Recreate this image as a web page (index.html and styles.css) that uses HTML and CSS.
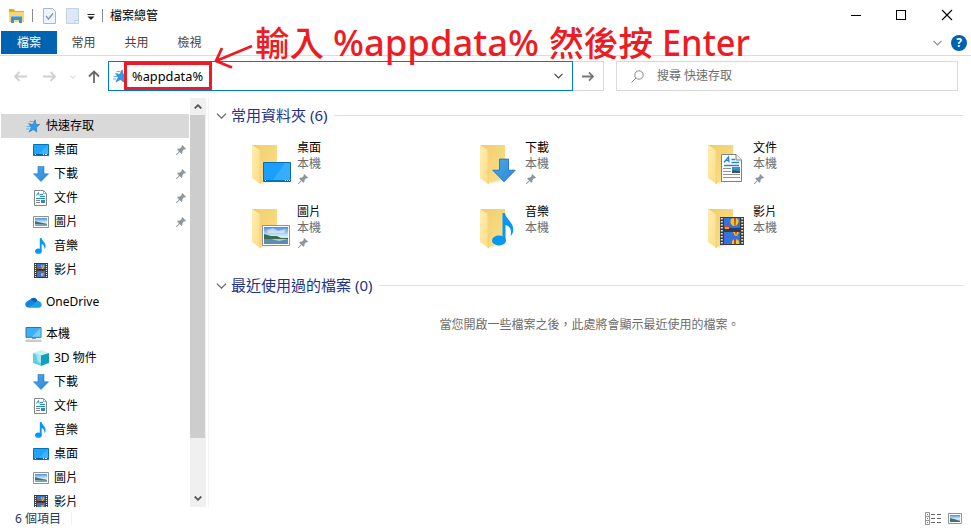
FILE: index.html
```html
<!DOCTYPE html>
<html lang="zh-TW">
<head>
<meta charset="utf-8">
<title>檔案總管</title>
<link rel="stylesheet" href="styles.css">
</head>
<body>
<svg class="defs" aria-hidden="true">
  <defs>
    <linearGradient id="gFold" x1="0" y1="0" x2="1" y2="1"><stop offset="0" stop-color="#efcd68"/><stop offset="1" stop-color="#fbe08f"/></linearGradient>
    <linearGradient id="gFlap" x1="0" y1="0" x2="1" y2="1"><stop offset="0" stop-color="#ffeeb4"/><stop offset="1" stop-color="#fddc82"/></linearGradient>
    <linearGradient id="gDown" x1="0" y1="0" x2="1" y2="1"><stop offset="0" stop-color="#4ba6ea"/><stop offset="1" stop-color="#2b88da"/></linearGradient>
    <linearGradient id="gSky" x1="0" y1="0" x2="0" y2="1"><stop offset="0" stop-color="#4a8fe0"/><stop offset=".55" stop-color="#d8eefa"/><stop offset="1" stop-color="#8fb4c8"/></linearGradient>
    <symbol id="pin" viewBox="0 0 10 10"><path fill="#8c969e" d="M6.200 0 10 3.800 8.800 4.400 8 4.300 6.500 6 6.300 8.200 5.400 8.800 3.600 7 .8 9.900 0 10 .1 9.200 3 6.400 1.200 4.600 2 3.700 4 3.500 5.700 2 5.600 1z"/></symbol>
    <symbol id="star" viewBox="0 0 14 14"><path fill="#2e9be8" stroke="#1478c8" stroke-width=".6" d="M9.200.8 9.800 5.200 13.700 5.600 10.400 8.300 10.800 13 7.400 10.500 3 13 5.200 8.500 3.200 5.600 7 5.200z"/><path stroke="#4bb0ee" stroke-width=".9" d="M3.500 2.500h4M2 4.500h3M.5 7.500h3.500M0 10h3"/></symbol>
    <symbol id="desk" viewBox="0 0 16 12"><path fill="#20a3fb" stroke="#0870b8" d="M.5.5h15v11H.5z"/><path fill="#41b2ff" d="M15 1v9H6z"/><path stroke="#085a98" d="M1 10.500h14"/><path stroke="#fff" d="M2 10.500h1M10 10.500h1M12 10.500h2"/></symbol>
    <symbol id="down" viewBox="0 0 16 16"><path fill="url(#gDown)" stroke="#2273b8" stroke-width=".6" d="M5 .4h6v7.400h4.500L8 15.500.5 7.800H5z"/></symbol>
    <symbol id="doc" viewBox="0 0 13 16"><path fill="#fff" stroke="#858585" d="M.5.5h9l3 3v12H.5z"/><path fill="none" stroke="#aaa" d="M9.500.5v3h3"/><path fill="none" stroke="#2588ce" d="M2.500 5.500 4.500 2.500 5 5.500M6 4.500h3M6 6.500h5M2 8.500h9"/><path stroke="#858585" d="M2 10.500h4M2 12.500h4"/><path fill="#3e83b8" d="M7 10h4v3H7z"/></symbol>
    <symbol id="pic" viewBox="0 0 16 12"><path fill="#fff" stroke="#929292" d="M.5.5h15v11H.5z"/><path fill="url(#gSky)" d="M2 2h12v8H2z"/><path fill="#437566" d="M2 5 5 6l3 .5L14 8v1L2 8z"/><path fill="#7ba3bd" d="M2 8.500h12V10H2z"/></symbol>
    <symbol id="note" viewBox="0 0 11 16"><ellipse cx="3.400" cy="13.200" rx="3.300" ry="2.600" fill="#0798f4"/><path fill="#0798f4" d="M4.800 0h1.700C6.800 3 11.400 4.500 10.500 9.500L9.500 11C9.500 8 8.300 6.500 6.700 6v7.500H4.800z"/></symbol>
    <symbol id="film" viewBox="0 0 14 15"><path fill="#3b3b3b" d="M0 0h14v15H0z"/><path stroke="#f2f2f2" stroke-width="1.200" stroke-dasharray="1 1" d="M1.500 1v13M12.500 1v13"/><path fill="#3a74cf" d="M3 1h8v6H3zM3 8h8v6H3z"/><path fill="#e4b51d" d="M7 2h3l.5 1.500L9 6H8zM7 10h3l-1 3H7z"/><path fill="#cf3b25" d="M8.300 2h1l-.2 3zM3 5l2-.5V6H3zM7 9h2l-1 2z"/><path fill="#27333d" d="M3 6h8v1H3z"/></symbol>
    <symbol id="cloud" viewBox="0 0 17 11"><path fill="#0b63b7" d="M5 3C7 0 11 0 12.400 3.500L12 8H4z"/><path fill="#1286d8" d="M4 3C7 2 9 5 12 7L4 10.500C0 11 -1 6 2 4.500z"/><path fill="#1c9fe9" d="M3.500 10.700 12 4C15 3.500 17 6 16.600 8.500 16.200 10 15 10.700 13.500 10.700z"/></symbol>
    <symbol id="pc" viewBox="0 0 17 15"><path fill="#39b0f8" stroke="#3e7292" d="M1 .5h15v9.800H1z"/><path fill="#73ccff" d="M15.500 1v8.800H7z"/><path stroke="#8397a5" d="M7 11.500h4M.5 14h16"/><path stroke="#c5d0d8" d="M1 13h15"/></symbol>
    <symbol id="cube" viewBox="0 0 16 16"><path fill="#c8f1f5" d="M0 3 8 0l8 3-8 3z"/><path fill="#5fd1dd" d="M0 3 8 5.500V16L0 13z"/><path fill="#129fb7" d="m16 3-8 2.500V16l8-3z"/><path fill="#a4e8ef" d="m3 4 5 1.500V13l-3-1z"/></symbol>
    <symbol id="chev" viewBox="0 0 12 7"><path fill="none" stroke="currentColor" stroke-width="1.500" d="m.7.700 5.300 5.300L11.300.700"/></symbol>
    <symbol id="arrow" viewBox="0 0 13 11"><path fill="none" stroke="currentColor" stroke-width="1.900" d="M0 5.500h12M7.500 1 12 5.500 7.500 10"/></symbol>
    <symbol id="folder" viewBox="0 0 42 42"><path fill="#f0f0f0" d="m11 39 17-4 5 1-20 4z"/><path fill="url(#gFold)" d="M2 1h25v34l-16 4-9-5z"/><path fill="url(#gFlap)" d="m2 1 9 6v33.500L2 34z"/><path fill="#efc86a" d="m9.500 6 1.500 1v33.500l-1.500-1z" opacity=".5"/></symbol>
    <symbol id="bigfilm" viewBox="0 0 24 28"><path fill="#3b3b3b" d="M0 0h24v28H0z"/><path stroke="#e2e2e2" stroke-width="2" stroke-dasharray="1.500 1.500" d="M1.800 1v27M22.200 1v27"/><path fill="#3571df" d="M4 1h16v12H4zM4 15h16v12H4z"/><path fill="#efc71d" d="M11 2q4-2 7 0 2 3-2 7h-3Q9 6 11 2zM13 15h6l-2 4h-2zM12 24q3-4 7 0v3h-7z"/><path fill="#d43d25" d="M14 1h2l-.5 8h-1zM4 9q4-2 7 1v3H4zM15 15h2l-1 4zM14 22h2v5h-2z"/><path fill="#153f7b" d="M4 11h16v2H4z"/><path fill="#d7b32b" d="M5 10h4v2H5z"/></symbol>
    <symbol id="bigdoc" viewBox="0 0 21 28"><path fill="#fff" stroke="#808080" d="M.5.5H15L20.500 6v21.500H.5z"/><path fill="#eee" stroke="#808080" d="M15 .5V6h5.500"/><path fill="none" stroke="#2588ce" stroke-width="1.300" d="M3 8.500 7.500 3 8 8.500M4.500 6.500h3M10.500 5.500H14M10.500 8.500H18M3 11.500h15"/><path stroke="#929292" d="M2 14.500h8M2 17.500h8M2 20.500h17M2 23.500h17"/><path fill="#408dd0" d="M11 13h8v6h-8z"/><path fill="#315d58" d="m11 16 8 1v2h-8z"/></symbol>
    <symbol id="bigpic" viewBox="0 0 28 21"><path fill="#fff" stroke="#929292" d="M.5.500h27v20H.500z"/><path fill="url(#gSky)" d="M2 2h24v17H2z"/><path fill="#fff" opacity=".5" d="m5 5 6-2 5 3 8-2-2 4H6z"/><path fill="#3d6b50" d="m2 9 7 2 6 0 4 2 7 0v1L2 15z"/><path fill="#5c8dae" d="M2 14h24v5H2z"/><path fill="#b4cbd6" d="M9 14h17l-9 2z"/></symbol>
    <symbol id="bigdesk" viewBox="0 0 28 20"><path fill="#1a9fff" stroke="#086eae" d="M.5.5h27v19H.5z"/><path fill="#37adff" d="M27 1v17H10L22 1z"/><path stroke="#0875bd" d="M1 18.500h26"/><path stroke="#fff" stroke-dasharray="1 1" d="M2 18.500h1M22 18.500h5"/></symbol>
  </defs>
</svg>
<div class="window">
  <header class="titlebar">
    <svg class="app-icon" viewBox="0 0 17 14"><path fill="#e9a820" d="M1 0h5l1 2h9v11H1z"/><path fill="#ffd56a" d="M1 3h15v10H1z"/><path fill="#3993d6" d="M3 7h11v7h-3v-3H6v3H3z"/><path fill="#73bdf0" d="M3 7h11v1H3z"/></svg>
    <i class="sep s1"></i>
    <svg class="q1" viewBox="0 0 13 16"><path fill="#eef4fb" stroke="#a5b7ca" d="M.5.500h9l3 3v12H.500z"/><path fill="none" stroke="#7890aa" stroke-width="1.200" d="m3 8 2.500 3L10 5.500"/></svg>
    <svg class="q2" viewBox="0 0 13 16"><path fill="#dde8f6" stroke="#c3d2e5" d="M.5.500h12v15H.500z"/><path fill="#fff" stroke="#b9cadf" d="M9 15.500v-3h3.500"/></svg>
    <svg class="q3" viewBox="0 0 8 6"><path stroke="#222" d="M.5.500h7"/><path fill="#222" d="M.5 2.500h7L4 6z"/></svg>
    <i class="sep s2"></i>
    <span class="title">檔案總管</span>
    <svg class="winbtns" viewBox="0 0 102 12"><path fill="none" stroke="#000" shape-rendering="crispEdges" d="M0 6.500h10M45.500 1.500h9v9h-9z"/><path stroke="#000" stroke-width="1.100" d="m91 1 10 10M101 1 91 11"/></svg>
  </header>
  <nav class="tabs">
    <span class="tab active">檔案</span><span class="tab">常用</span><span class="tab">共用</span><span class="tab">檢視</span>
    <svg class="collapse"><use href="#chev"/></svg>
    <span class="help">?</span>
  </nav>
  <div class="toolbar">
    <svg class="nav back"><use href="#arrow"/></svg>
    <svg class="nav fwd"><use href="#arrow"/></svg>
    <svg class="hist"><use href="#chev"/></svg>
    <svg class="up" viewBox="0 0 12 13"><path fill="none" stroke="#696969" stroke-width="1.800" d="M6 13V1.500M1 6.500l5-5 5 5"/></svg>
    <div class="address"><svg class="addr-star"><use href="#star"/></svg><span>%appdata%</span><svg class="drop"><use href="#chev"/></svg></div>
    <div class="go"><svg><use href="#arrow"/></svg></div>
    <div class="search"><svg viewBox="0 0 13 13"><circle cx="8" cy="5" r="4.200" fill="none" stroke="#888"/><path stroke="#888" d="M5 8 .5 12.500"/></svg><span>搜尋 快速存取</span></div>
  </div>
  <main class="body">
    <aside class="tree">
      <div class="row root selected"><svg class="i-star"><use href="#star"/></svg><span>快速存取</span></div>
      <div class="row"><svg class="i-desk"><use href="#desk"/></svg><span>桌面</span><svg class="pin"><use href="#pin"/></svg></div>
      <div class="row"><svg class="i-down"><use href="#down"/></svg><span>下載</span><svg class="pin"><use href="#pin"/></svg></div>
      <div class="row"><svg class="i-doc"><use href="#doc"/></svg><span>文件</span><svg class="pin"><use href="#pin"/></svg></div>
      <div class="row"><svg class="i-desk"><use href="#pic"/></svg><span>圖片</span><svg class="pin"><use href="#pin"/></svg></div>
      <div class="row"><svg class="i-note"><use href="#note"/></svg><span>音樂</span></div>
      <div class="row"><svg class="i-film"><use href="#film"/></svg><span>影片</span></div>
      <div class="row root gap"><svg class="i-cloud"><use href="#cloud"/></svg><span class="latin">OneDrive</span></div>
      <div class="row root gap"><svg class="i-pc"><use href="#pc"/></svg><span>本機</span></div>
      <div class="row"><svg class="i-down"><use href="#cube"/></svg><span>3D 物件</span></div>
      <div class="row"><svg class="i-down"><use href="#down"/></svg><span>下載</span></div>
      <div class="row"><svg class="i-doc"><use href="#doc"/></svg><span>文件</span></div>
      <div class="row"><svg class="i-note"><use href="#note"/></svg><span>音樂</span></div>
      <div class="row"><svg class="i-desk"><use href="#desk"/></svg><span>桌面</span></div>
      <div class="row"><svg class="i-desk"><use href="#pic"/></svg><span>圖片</span></div>
      <div class="row"><svg class="i-film"><use href="#film"/></svg><span>影片</span></div>
    </aside>
    <div class="scrollbar">
      <svg viewBox="0 0 8 5"><path fill="none" stroke="#555" stroke-width="1.800" d="m.7 4.500 3.300-3.300 3.300 3.300"/></svg>
      <div class="thumb"></div>
      <svg class="dn" viewBox="0 0 8 5"><path fill="none" stroke="#555" stroke-width="1.800" d="m.7.500 3.300 3.300L7.300.500"/></svg>
    </div>
    <section class="content">
      <h2><svg><use href="#chev"/></svg><span>常用資料夾 (6)</span><i></i></h2>
      <div class="grid">
        <div class="item"><div class="ico"><svg class="folder"><use href="#folder"/></svg><svg class="ov o-desk"><use href="#bigdesk"/></svg></div><div class="txt"><b>桌面</b><span>本機</span><svg class="pin"><use href="#pin"/></svg></div></div>
        <div class="item"><div class="ico"><svg class="folder"><use href="#folder"/></svg><svg class="ov o-down"><use href="#down"/></svg></div><div class="txt"><b>下載</b><span>本機</span><svg class="pin"><use href="#pin"/></svg></div></div>
        <div class="item"><div class="ico"><svg class="folder"><use href="#folder"/></svg><svg class="ov o-doc"><use href="#bigdoc"/></svg></div><div class="txt"><b>文件</b><span>本機</span><svg class="pin"><use href="#pin"/></svg></div></div>
        <div class="item"><div class="ico"><svg class="folder"><use href="#folder"/></svg><svg class="ov o-pic"><use href="#bigpic"/></svg></div><div class="txt"><b>圖片</b><span>本機</span><svg class="pin"><use href="#pin"/></svg></div></div>
        <div class="item"><div class="ico"><svg class="folder"><use href="#folder"/></svg><svg class="ov o-note" viewBox="0 0 22 33"><ellipse cx="7" cy="27.500" rx="7" ry="5" fill="#0798f4"/><path fill="#0798f4" d="M10.500 0h2.500c1 7 10 10 8 19-.5 2-1.500 3-2.500 4C20 17 18 13 13.500 12v16h-3z"/></svg></div><div class="txt"><b>音樂</b><span>本機</span></div></div>
        <div class="item"><div class="ico"><svg class="folder"><use href="#folder"/></svg><svg class="ov o-film"><use href="#bigfilm"/></svg></div><div class="txt"><b>影片</b><span>本機</span></div></div>
      </div>
      <h2><svg><use href="#chev"/></svg><span>最近使用過的檔案 (0)</span><i></i></h2>
      <p class="empty">當您開啟一些檔案之後，此處將會顯示最近使用的檔案。</p>
    </section>
  </main>
  <footer class="status">
    <span>6 個項目</span><i></i>
    <svg class="v1" viewBox="0 0 17 13"><path fill="none" stroke="#929292" d="M.5.500h4v12h-4zM.5 4.500h4M.5 8.500h4"/><path stroke="#666" d="M6 2.500h4M12 2.500h4M6 6.500h4M12 6.500h4M6 10.500h4M12 10.500h4M2 2.500h1M2 6.500h1M2 10.500h1"/></svg>
    <svg class="v2" viewBox="0 0 14 11"><path fill="#fff" stroke="#929292" d="M.5.500h13v10H.500z"/><path fill="url(#gSky)" d="M2 2h10v7H2z"/><path fill="#466f68" d="m2 5 4 1 6 2v1H2z"/></svg>
  </footer>
  <svg class="note-layer" viewBox="0 0 971 531">
    <rect x="125.500" y="63.500" width="85" height="25" fill="none" stroke="#ed1c24" stroke-width="3"/>
    <path fill="none" stroke="#ed1c24" stroke-width="2.800" d="M252 46 216 61M222 48 216 61l16 6.500"/>
    <g class="note-text">
      <text x="255" y="56" textLength="69">輸入</text>
      <text class="en" x="333" y="56" textLength="206" lengthAdjust="spacingAndGlyphs">%appdata%</text>
      <text x="549" y="56" textLength="104">然後按</text>
      <text class="en" x="662" y="56" textLength="88" lengthAdjust="spacingAndGlyphs">Enter</text>
    </g>
  </svg>
</div>
</body>
</html>
```
FILE: styles.css
```css
* { box-sizing: border-box; }
body { margin: 0; background: #fff; font: 12px/16px "Noto Sans", "Noto Sans CJK TC", sans-serif; color: #000; overflow: hidden; }
svg { display: block; flex: none; }
.defs { position: absolute; width: 0; height: 0; }
.window { position: relative; width: 971px; height: 531px; display: flex; flex-direction: column; overflow: hidden; white-space: nowrap; }

.titlebar { height: 31px; display: flex; align-items: center; padding-left: 8px; }
.app-icon { width: 17px; height: 14px; }
.sep { width: 1px; height: 13px; background: #8a8a8a; }
.s1 { margin-left: 7px; }
.q1 { width: 13px; height: 16px; margin-left: 10px; }
.q2 { width: 13px; height: 16px; margin-left: 10px; }
.q3 { width: 8px; height: 6px; margin: 2px 0 0 8px; }
.s2 { margin-left: 7px; }
.title { margin-left: 7px; }
.winbtns { width: 102px; height: 12px; margin: -1px 18px 0 auto; }

.tabs { height: 25px; display: flex; align-items: center; padding: 0 4px 1px 1px; border-bottom: 1px solid #dadbdc; color: #444; }
.tab { width: 53px; text-align: center; line-height: 23px; }
.tab.active { width: 56px; background: #0063b1; color: #fff; }
.collapse { width: 9px; height: 6px; color: #888; margin-left: auto; }
.help { width: 16px; height: 16px; margin-left: 9px; border-radius: 50%; background: #0063b1; color: #fff; font-weight: 700; text-align: center; line-height: 16px; }

.toolbar { height: 42px; display: flex; align-items: center; padding: 0 13px 1px 14px; }
.nav { width: 13px; height: 11px; color: #d0d0d0; }
.back { transform: scaleX(-1); }
.fwd { margin-left: 16px; }
.hist { width: 6px; height: 4px; margin-left: 14px; color: #bbb; }
.up { width: 12px; height: 13px; margin-left: 12px; }
.address { width: 465px; height: 30px; margin-left: 8px; border: 1px solid #0078d7; display: flex; align-items: center; padding-left: 4px; font-size: 12.8px; }
.address, .go, .search { margin-top: -1px; }
.addr-star { width: 14px; height: 14px; margin-right: 5px; }
.drop { width: 9px; height: 6px; margin: 0 9px 0 auto; color: #444; }
.go { width: 31px; height: 30px; border: 1px solid #d9d9d9; border-left: 0; display: grid; place-items: center; color: #777; }
.go svg { width: 12px; height: 11px; }
.search { flex: 1; height: 30px; margin-left: 12px; border: 1px solid #d9d9d9; display: flex; align-items: center; padding-left: 14px; color: #6d6d6d; }
.search svg { width: 13px; height: 13px; margin-right: 13px; }

.body { height: 409px; display: flex; }
.tree { width: 190px; padding: 16px 1px 0; overflow: hidden; }
.row { height: 24px; display: grid; grid-template-columns: 16px 1fr 10px; column-gap: 5px; align-items: center; padding: 0 3px 0 32px; }
.row > svg:first-child { justify-self: center; }
.row.root { padding-left: 24px; }
.row.selected { background: #d9d9d9; }
.row.gap { margin-top: 8px; }
.pin { width: 10px; height: 10px; }
.i-star { width: 14px; height: 14px; }
.i-desk { width: 16px; height: 12px; }
.i-down { width: 16px; height: 16px; }
.row .i-doc { width: 13px; height: 16px; margin-right: 1px; }
.row .i-note { width: 11px; height: 16px; margin-right: 1px; }
.i-film { width: 14px; height: 15px; }
.i-cloud { width: 17px; height: 11px; }
.i-pc { width: 17px; height: 15px; }
.scrollbar { width: 16px; background: #f0f0f0; display: flex; flex-direction: column; align-items: center; padding-top: 6px; }
.scrollbar svg { width: 8px; height: 5px; }
.thumb { width: 15px; height: 323px; margin: 6px 1px 0 0; background: #cdcdcd; }
.scrollbar .dn { margin: auto 0 6px; }

.content { flex: 1; margin-left: 2px; border-left: 1px solid #f3f3f3; padding: 8px 8px 0 7px; }
h2 { margin: 0; height: 20px; display: flex; align-items: center; font-size: 15px; font-weight: 400; color: #1e3287; }
h2 span { margin-top: -2px; }
h2 svg { width: 11px; height: 6px; color: #666; margin: -1px 4px 0 0; }
h2 i { flex: 1; height: 1px; margin: -1px 0 0 7px; background: #e0e0e0; }
.grid { display: grid; grid-template-columns: repeat(3, 228px); grid-auto-rows: 64px; padding: 14px 0 8px 34px; }
.item { display: flex; }
.ico { position: relative; width: 47px; height: 50px; padding-top: 5px; }
.folder { width: 42px; height: 42px; margin-top: -1px; }
.ov { position: absolute; }
.o-desk { width: 28px; height: 20px; left: 13px; top: 22px; }
.o-down { width: 24px; height: 25px; left: 14px; top: 18px; }
.o-doc { width: 21px; height: 28px; left: 15px; top: 14px; }
.o-pic { width: 28px; height: 21px; left: 12px; top: 21px; }
.o-note { width: 22px; height: 33px; left: 14px; top: 9px; }
.o-film { width: 24px; height: 28px; left: 14px; top: 13px; }
.txt { display: flex; flex-direction: column; }
.txt b { font-weight: 400; }
.txt span { color: #6d6d6d; }
.txt .pin { margin: 2px 0 0 1px; }
.empty { margin: 21px 0 0; text-align: center; color: #6d6d6d; }

.status { flex: 1; display: flex; align-items: center; padding: 0 9px 1px 15px; color: #1e395b; }
.status i { width: 1px; height: 13px; background: #f0f0f0; margin-left: 10px; }
.v1 { width: 17px; height: 13px; margin: -1px 0 0 auto; }
.v2 { width: 14px; height: 11px; margin: -1px 0 0 6px; }

.note-layer { position: absolute; left: 0; top: 0; width: 971px; height: 531px; pointer-events: none; }
.note-text { font: 500 34.5px "Noto Sans", "Noto Sans CJK TC", sans-serif; fill: #ed1c24; }
.note-text .en { font-size: 36.5px; }
```
